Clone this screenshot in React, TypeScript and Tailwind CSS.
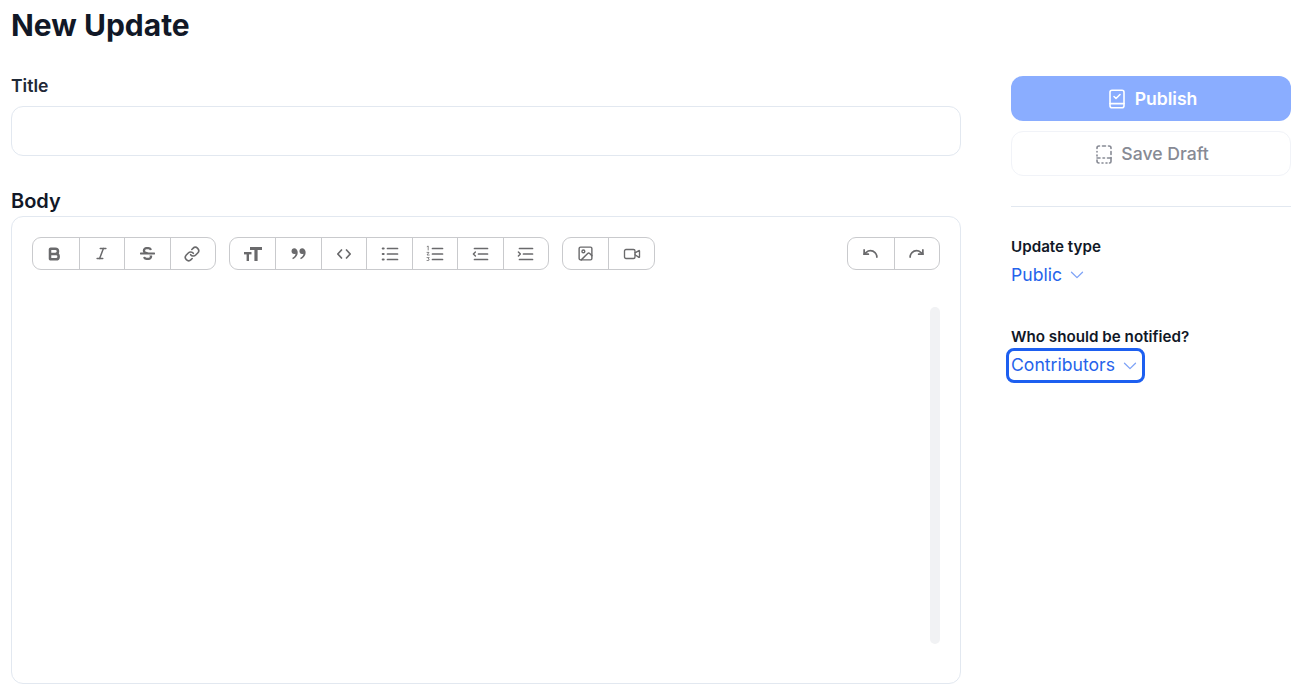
import React from 'react';
import { Bold, Italic, Link, Video, Undo, Redo, Image } from 'lucide-react';
import { RiDoubleQuotesR } from 'react-icons/ri';
import { FaStrikethrough } from 'react-icons/fa';

const Icon = ({ w = 18, h = 18, children }: { w?: number; h?: number; children: React.ReactNode }) => (
  <svg width={w} height={h} viewBox={`0 0 ${w} ${h}`} fill="none" stroke="currentColor" strokeWidth="1.7" strokeLinecap="round" strokeLinejoin="round">
    {children}
  </svg>
);

const Chevron = () => (
  <svg width="14" height="8" viewBox="0 0 14 8" fill="none" stroke="#7ea3f7" strokeWidth="1.3" strokeLinecap="round" strokeLinejoin="round">
    <path d="M1.5 1.2 7 6.6l5.5-5.4" />
  </svg>
);

const CodeIcon = () => (
  <Icon>
    <path d="M6.5 5 2.8 9l3.7 4" />
    <path d="M11.5 5l3.7 4-3.7 4" />
  </Icon>
);

const TextSizeIcon = () => (
  <svg width="20" height="18" viewBox="0 0 20 18" fill="currentColor">
    <rect x="7" y="2" width="12" height="3" />
    <rect x="11.4" y="2" width="3.2" height="14" />
    <rect x="1" y="7" width="7.5" height="2.4" />
    <rect x="3.6" y="7" width="2.4" height="9" />
  </svg>
);

const BulletsIcon = () => (
  <Icon>
    <path d="M6.5 3.5H16.5M6.5 9H16.5M6.5 14.5H16.5" />
    <path d="M1.8 3.5h.8M1.8 9h.8M1.8 14.5h.8" strokeWidth="2.2" />
  </Icon>
);

const NumbersIcon = () => (
  <Icon>
    <path d="M6.5 3.5H16.5M6.5 9H16.5M6.5 14.5H16.5" />
    <path d="M1.2 1.5 2.2 1v4M1 7.4h2l-2 2.6h2.2M1 12.6h2.2l-1 1.3c.8 0 1 .4 1 .9s-.5.9-2.2.7" strokeWidth="0.8" />
  </Icon>
);

const OutdentIcon = () => (
  <Icon>
    <path d="M2.5 3.5h13M6.5 9h9M2.5 14.5h13" />
    <path d="M3.4 7 1.4 9l2 2" strokeWidth="1.4" />
  </Icon>
);

const IndentIcon = () => (
  <Icon>
    <path d="M2.5 3.5h13M6.5 9h9M2.5 14.5h13" />
    <path d="M1.4 7l2 2-2 2" strokeWidth="1.4" />
  </Icon>
);

const BookIcon = () => (
  <svg width="16" height="20" viewBox="0 0 16 20" fill="none" stroke="currentColor" strokeWidth="1.6" strokeLinecap="round" strokeLinejoin="round">
    <rect x="1" y="1.2" width="14" height="17.6" rx="2" />
    <path d="M1 14.6h14" />
    <path d="M5 7.5 7 9.5l4-4" />
  </svg>
);

const DraftIcon = () => (
  <svg width="16" height="19" viewBox="0 0 16 19" fill="none" stroke="currentColor" strokeWidth="1.6" strokeLinecap="round" strokeLinejoin="round">
    <path d="M1 3.5V3a2 2 0 0 1 2-2h.5M6.5 1h3M12.5 1h.5a2 2 0 0 1 2 2v.5M15 6.5v3M15 12.5v4a1.5 1.5 0 0 1-1.5 1.5M11 18h-1M7 18H6M3 18a2 2 0 0 1-2-2v-1M1 11v-1M1 7v-.5" />
    <path d="M1 13h3M7 13h1.5M11.5 13H15" />
  </svg>
);

const Group = ({ wide, items }: { wide: 'odd' | 'even'; items: React.ReactNode[] }) => (
  <div className="h-[33px] flex rounded-[9px] border border-[#c9cacd] overflow-hidden">
    {items.map((item, i) => (
      <button
        key={i}
        className={`h-full flex items-center justify-center text-[#6a6a6c] ${
          wide === 'odd' ? 'odd:w-[46px] even:w-[45px]' : 'odd:w-[45px] even:w-[46px]'
        } ${i === 0 ? '' : 'border-l border-[#c9cacd]'}`}
      >
        {item}
      </button>
    ))}
  </div>
);

const App = () => {
  return (
    <div className="w-[1294px] h-[694px] overflow-hidden bg-white flex gap-[50px] pl-[11px] pt-[7px] font-['Inter',sans-serif] text-[#111827]">
      <div className="w-[950px]">
        <h1 className="text-[30px] leading-9 font-bold mb-[31px]">New Update</h1>
        <label className="block text-[17.6px] leading-6 font-semibold text-[#1f2937] mb-[8px]">Title</label>
        <div className="h-[50px] rounded-[12px] border border-[#e2e8f0] mb-[31px]"></div>
        <label className="block text-[20px] leading-[29px] font-semibold">Body</label>
        <div className="h-[468px] rounded-[12px] border border-[#e2e8f0] px-5 pt-5">
          <div className="flex">
            <Group wide="odd" items={[<Bold size={16} strokeWidth={3.8} className="-ml-1" />, <Italic size={15} strokeWidth={2.4} className="-ml-[2px]" />, <FaStrikethrough size={15} />, <Link size={16} strokeWidth={2.4} className="-ml-[2px]" />]} />
            <div className="w-[13px]" />
            <Group wide="even" items={[<TextSizeIcon />, <RiDoubleQuotesR size={19} />, <CodeIcon />, <BulletsIcon />, <NumbersIcon />, <OutdentIcon />, <IndentIcon />]} />
            <div className="w-[13px]" />
            <Group wide="even" items={[<Image size={17} strokeWidth={2} />, <Video size={18} strokeWidth={1.8} />]} />
            <div className="flex-1" />
            <Group wide="odd" items={[<Undo size={17} strokeWidth={2.4} className="-ml-[2px]" />, <Redo size={17} strokeWidth={2.4} className="-ml-[2px]" />]} />
          </div>
          <div className="flex justify-end mt-[37px]">
            <div className="w-[10px] h-[337px] rounded-full bg-[#f1f2f4]" />
          </div>
        </div>
      </div>
      <div className="w-[280px] pt-[69px]">
        <button className="w-full h-[45px] pt-[1px] pl-[4px] rounded-[12px] bg-[#8aadff] text-white text-[17.6px] font-semibold flex items-center justify-center gap-[10px]">
          <BookIcon /> Publish
        </button>
        <button className="w-full h-[45px] pt-[1px] pl-[3px] mt-[10px] rounded-[12px] border border-[#f1f3f8] bg-white text-[#878a94] text-[17.6px] font-medium flex items-center justify-center gap-[9px]">
          <DraftIcon /> Save Draft
        </button>
        <div className="h-px bg-[#e2e8f0] mt-[30px]" />
        <div className="mt-[30px] text-[15.2px] leading-5 font-semibold">Update type</div>
        <div className="mt-[8px] flex items-center gap-2 text-[17.6px] leading-[20px] text-[#2563eb]">
          Public <Chevron />
        </div>
        <div className="mt-[42px] text-[15.2px] leading-5 font-semibold">Who should be notified?</div>
        <div className="mt-[1px] -ml-[5px] w-[139px] h-[35px] pl-[2px] rounded-[8px] border-[3px] border-[#1d5ff0] flex items-center gap-2 text-[17.6px] text-[#2563eb]">
          Contributors <Chevron />
        </div>
      </div>
    </div>
  );
};

export default App;
